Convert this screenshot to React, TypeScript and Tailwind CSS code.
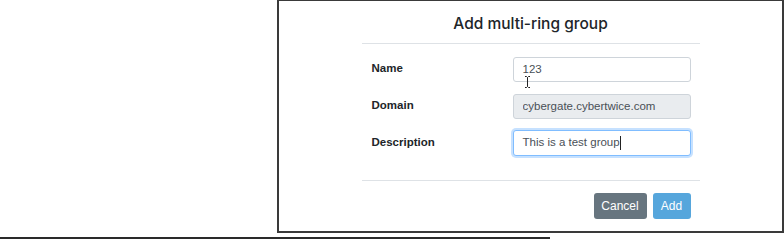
import React from 'react';

const font = { fontFamily: '"Liberation Sans", Arial, sans-serif' };

const Row: React.FC<{ label: string; children: React.ReactNode }> = ({ label, children }) => (
  <div className="flex items-center h-[25px]">
    <label className="w-[151px] pl-[10px] text-[11.5px] font-bold text-[#212529]">{label}</label>
    <div className="w-[178px] h-[25px] relative">{children}</div>
  </div>
);

export default function App() {
  return (
    <div className="w-[784px] h-[239px] bg-white overflow-hidden flex flex-col" style={font}>
      <div className="ml-[277px] w-[507px] h-[233px] border-2 border-t border-[#3a3a3a] flex flex-col">
        <div className="w-[338px] mx-auto flex flex-col">
          <h2 className="h-[42px] flex items-center justify-center text-[15.5px] font-medium text-[#212529] pt-[3px]" style={{ fontFamily: 'Inter, "Liberation Sans", sans-serif' }}>
            Add multi-ring group
          </h2>
          <div className="h-px bg-[#dee2e6]" />

          <div className="flex flex-col gap-[12px] pt-[12px]">
            <Row label="Name">
              <input
                readOnly
                value="123"
                className="w-full h-full border border-[#ced4da] rounded-[3px] px-[9px] text-[11.5px] text-[#495057] bg-white outline-none"
                style={font}
              />
              {/* mouse cursor */}
              <svg className="absolute left-[11px] top-[20px]" width="7" height="12" viewBox="0 0 7 12">
                <path d="M1 0.5 H2.5 L3.5 1.5 L4.5 0.5 H6 M3.5 1.5 V10.5 M1 11.5 H2.5 L3.5 10.5 L4.5 11.5 H6" stroke="#222" strokeWidth="1" fill="none" />
              </svg>
            </Row>
            <Row label="Domain">
              <input
                readOnly
                value="cybergate.cybertwice.com"
                className="w-full h-full border border-[#ced4da] rounded-[3px] px-[9px] text-[11.5px] text-[#495057] bg-[#e9ecef] outline-none"
                style={font}
              />
            </Row>
            <Row label="Description">
              <div className="w-full h-[26px] border border-[#80bdff] rounded-[3px] px-[9px] flex items-center text-[11.5px] text-[#495057] bg-white shadow-[0_0_0_2px_rgba(128,189,255,0.45)]">
                <span>This is a test group</span>
                <span className="w-px h-[14px] bg-[#222]" />
              </div>
            </Row>
          </div>

          <div className="h-px bg-[#dee2e6] mt-[25px]" />

          <div className="flex justify-end gap-[6px] pr-[9px] pt-[12px]">
            <button className="w-[53px] h-[26px] rounded-[3px] bg-[#67757f] text-white text-[12px]">Cancel</button>
            <button className="w-[38px] h-[26px] rounded-[3px] bg-[#56a6dc] text-white text-[12px]">Add</button>
          </div>
        </div>
      </div>
      <div className="mt-[4px] w-[550px] h-[2px] bg-[#2a2a2a]" />
    </div>
  );
}
